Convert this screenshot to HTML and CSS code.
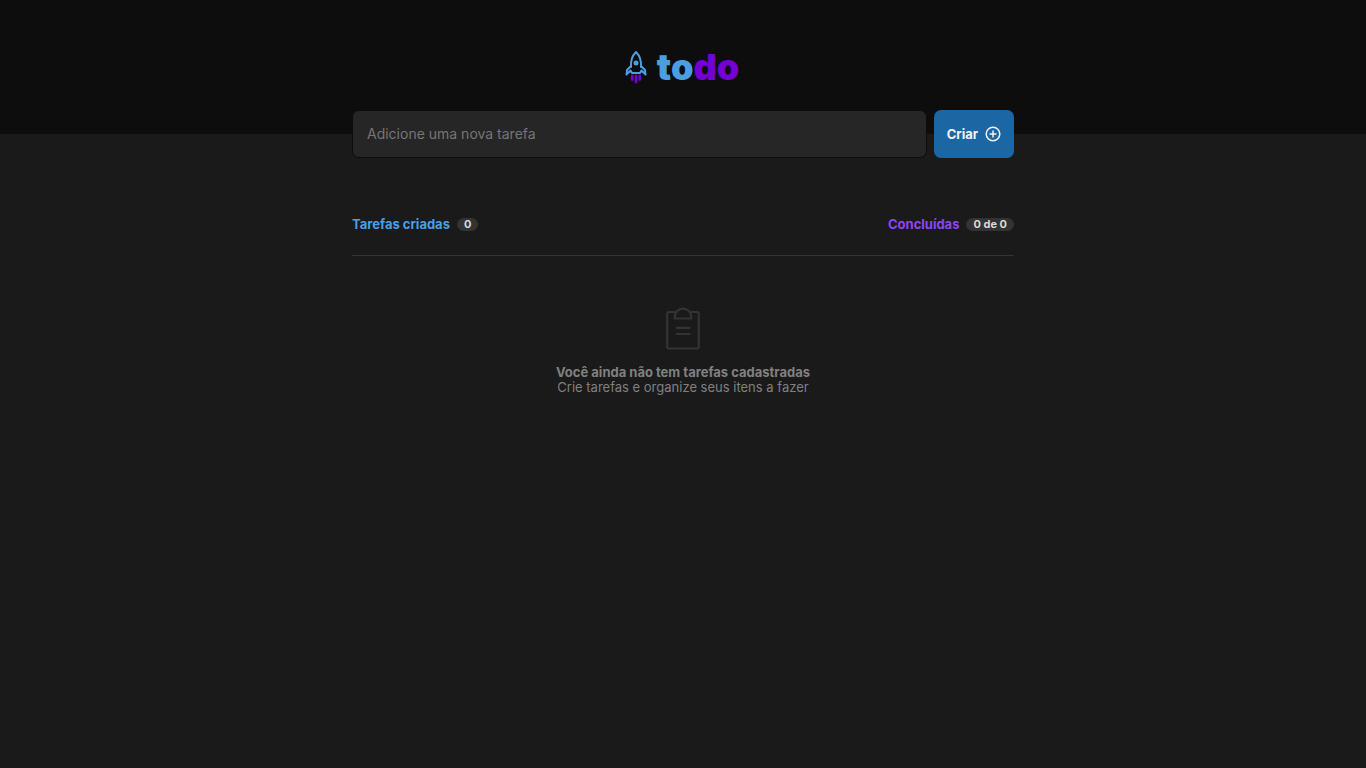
FILE: index.html
```html
<!DOCTYPE html>
<html lang="pt-BR">
<head>
<meta charset="utf-8">
<meta name="viewport" content="width=device-width, initial-scale=1">
<title>todo</title>
<link rel="stylesheet" href="styles.css">
</head>
<body>
<header class="header">
  <h1 class="logo">
    <svg class="logo-icon" width="22" height="34" viewBox="0 0 22 34" fill="none" aria-hidden="true">
      <g stroke="#4a9fe3" stroke-width="2" stroke-linejoin="round" stroke-linecap="round">
        <path d="M6 17C5.500 10.500 7 6 11 2C15 6 16.500 10.500 16 17"/>
        <path d="M6 16L2 20L1.500 24.500L5.500 20.500L7 23H15L16.500 20.500L20.500 24.500L20 20L16 16"/>
      </g>
      <circle cx="11" cy="13" r="2.500" fill="#4a9fe3"/>
      <path d="M7.200 26V29.500M11 26V32M14.800 26V29.500" stroke="#7400d1" stroke-width="2.800" stroke-linecap="round"/>
    </svg>
    <span class="logo-text">to<span class="logo-accent">do</span></span>
  </h1>
</header>
<main class="content">
  <form class="new-task">
    <input class="task-input" type="text" placeholder="Adicione uma nova tarefa" aria-label="Adicione uma nova tarefa">
    <button class="create-button" type="submit">Criar
      <svg width="16" height="16" viewBox="0 0 16 16" fill="none" stroke="currentColor" stroke-width="1.500" aria-hidden="true">
        <circle cx="8" cy="8" r="6.800"/>
        <path d="M8 4.500V11.500M4.500 8H11.500"/>
      </svg>
    </button>
  </form>
  <section class="tasks">
    <div class="summary">
      <p class="counter created">Tarefas criadas <span class="badge">0</span></p>
      <p class="counter done">Concluídas <span class="badge">0 de 0</span></p>
    </div>
    <div class="empty">
      <svg width="36" height="44" viewBox="0 0 36 44" fill="none" stroke="#333333" stroke-width="2.200" stroke-linecap="round" stroke-linejoin="round" aria-hidden="true">
        <path d="M10.500 5H3.800A1.800 1.800 0 0 0 2.200 6.800V39.500A1.800 1.800 0 0 0 3.800 41.500H32.200A1.800 1.800 0 0 0 33.800 39.500V6.800A1.800 1.800 0 0 0 32.200 5H25.500"/>
        <path d="M9.800 11.500V9.800A8.200 8.200 0 0 1 26.200 9.800V11.500Z"/>
        <path d="M11.500 20.800H24.500M11.500 27H24.500"/>
      </svg>
      <p class="empty-text"><strong>Você ainda não tem tarefas cadastradas</strong><br>Crie tarefas e organize seus itens a fazer</p>
    </div>
  </section>
</main>
</body>
</html>
```
FILE: styles.css
```css
* {
  box-sizing: border-box;
  margin: 0;
}

body {
  min-height: 100vh;
  background: #1a1a1a;
  color: #808080;
  font: 400 13px/15px Inter, sans-serif;
}

.header {
  display: flex;
  justify-content: center;
  padding: 45px 16px;
  background: #0d0d0d;
}

.logo {
  display: flex;
  align-items: center;
  gap: 10px;
  margin-right: 2px;
  font-size: 36px;
  font-weight: 900;
  line-height: 44px;
}

.logo-text {
  color: #4a9fe3;
}

.logo-accent {
  color: #7400d1;
}

.content {
  max-width: 694px;
  margin: -24px auto 0;
  padding: 0 16px;
}

.new-task {
  display: flex;
  gap: 7px;
}

.task-input {
  flex: 1;
  min-width: 0;
  height: 48px;
  padding: 0 14px 2px;
  border: 1px solid #0d0d0d;
  border-radius: 7px;
  background: #262626;
  color: #f2f2f2;
  font: 400 14px Inter, sans-serif;
}

.task-input::placeholder {
  color: #757575;
}

.create-button {
  display: flex;
  align-items: center;
  gap: 7px;
  height: 48px;
  padding: 0 13px;
  border: 0;
  border-radius: 7px;
  background: #1c67a3;
  color: #f2f2f2;
  font: 700 13px Inter, sans-serif;
  cursor: pointer;
}

.tasks {
  margin-top: 59px;
}

.summary {
  display: flex;
  justify-content: space-between;
  padding-bottom: 23px;
  border-bottom: 1px solid #333333;
}

.counter {
  display: flex;
  align-items: center;
  gap: 7px;
  font-weight: 700;
}

.created {
  color: #4a9fe3;
}

.done {
  color: #9043f5;
}

.badge {
  padding: 0 7px;
  border-radius: 7px;
  background: #333333;
  color: #d9d9d9;
  font-size: 11px;
  line-height: 13px;
}

.empty {
  display: flex;
  flex-direction: column;
  align-items: center;
  gap: 14px;
  padding: 51px 0;
}

.empty-text {
  text-align: center;
}
```
